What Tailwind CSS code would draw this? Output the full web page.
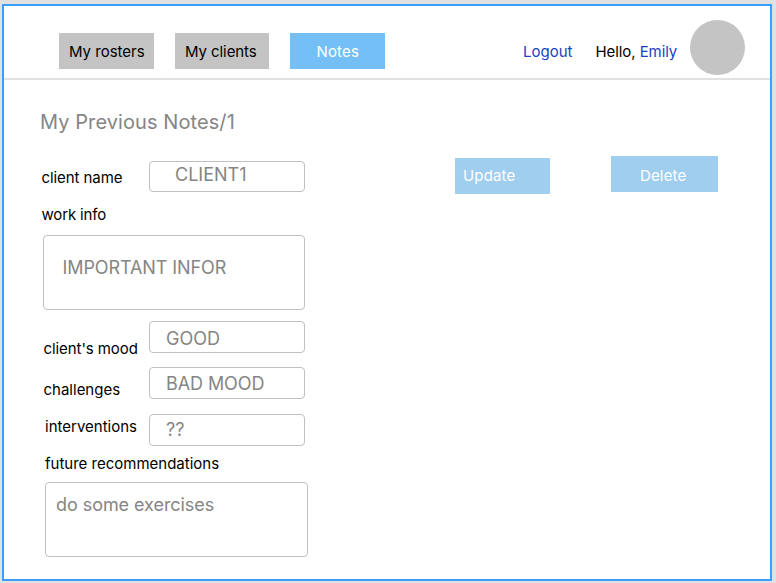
<!DOCTYPE html>
<html lang="en">
<head>
<meta charset="utf-8">
<title>My Previous Notes</title>
<script src="https://cdn.jsdelivr.net/npm/@tailwindcss/browser@4"></script>
</head>
<body class="h-[583px] w-[776px] overflow-hidden bg-[#e1e1e1] pt-1 pl-0.5 font-['Inter',sans-serif] text-[15px] leading-5 text-black">
<div class="h-[577px] w-[770px] border-2 border-[#3b9dfc] bg-white whitespace-nowrap">
  <header class="flex h-[74px] items-start border-b-2 border-[#e1e1e1] pl-[55px]">
    <nav class="mt-[27px] flex gap-[21px]">
      <a class="flex h-9 w-[95px] items-center bg-[#c4c4c4] pt-0.5 pl-2.5"><span>My rosters</span></a>
      <a class="flex h-9 w-[94px] items-center bg-[#c4c4c4] pt-0.5 pl-2.5 tracking-[-0.005em]"><span>My clients</span></a>
      <a class="flex h-9 w-[95px] items-center bg-[#74bff5] pt-0.5 pl-[26.5px] tracking-[0.01em] text-white"><span>Notes</span></a>
    </nav>
    <a class="mt-9 ml-[138px] w-[72px] text-[#1a3fc4]">Logout</a>
    <p class="mt-9 w-[95px] pl-[0.5px] tracking-[-0.005em]">Hello, <span class="text-[#1a3fc4]">Emily</span></p>
    <div class="mt-[14px] size-[55px] rounded-full bg-[#c4c4c4]"></div>
  </header>
  <main class="flex items-start">
    <section class="w-[451px] pl-9">
      <h1 class="pt-[29px] text-[20px] leading-[26px] tracking-[0.004em] text-[#858585]">My Previous Notes/1</h1>
      <div class="mt-[26px] flex h-[31px] items-start">
        <label class="mt-[7px] w-[109px] pl-[1.5px] tracking-[-0.005em]">client name</label>
        <div class="h-[31px] w-[156px] rounded-[4px] border border-[#c0c0c0] pt-px pl-[25px] text-[18px] leading-6 text-[#858585]">CLIENT1</div>
      </div>
      <label class="mt-[13px] block pl-[1.5px] tracking-[-0.01em]">work info</label>
      <div class="mt-2.5 ml-[3px] h-[75px] w-[262px] rounded-[4px] border border-[#c0c0c0] pt-5 pl-[18.5px] text-[18px] leading-6 tracking-[-0.005em] text-[#858585]">IMPORTANT INFOR</div>
      <div class="mt-[11px] flex h-8 items-start">
        <label class="mt-[18px] w-[109px] pl-[3.5px] tracking-[-0.005em]">client's mood</label>
        <div class="h-8 w-[156px] rounded-[4px] border border-[#c0c0c0] pt-[5px] pl-4 text-[18px] leading-6 text-[#858585]">GOOD</div>
      </div>
      <div class="mt-3.5 flex h-8 items-start">
        <label class="mt-[13px] w-[109px] pl-[3.5px]">challenges</label>
        <div class="h-8 w-[156px] rounded-[4px] border border-[#c0c0c0] pt-1 pl-4 text-[18px] leading-6 tracking-[-0.005em] text-[#858585]">BAD MOOD</div>
      </div>
      <div class="mt-[15px] flex h-8 items-start">
        <label class="mt-[3px] w-[109px] pl-[5px]">interventions</label>
        <div class="h-8 w-[156px] rounded-[4px] border border-[#c0c0c0] pt-[3px] pl-4 text-[18px] leading-6 text-[#858585]">??</div>
      </div>
      <label class="mt-2 block pl-[5px]">future recommendations</label>
      <div class="mt-2 ml-[5px] h-[75px] w-[263px] rounded-[4px] border border-[#c0c0c0] pt-2.5 pl-[10px] text-[18px] leading-6 tracking-[-0.003em] text-[#858585]">do some exercises</div>
    </section>
    <div class="flex items-start gap-[61px] pt-[76px] text-white">
      <button class="mt-0.5 flex h-9 w-[95px] items-center bg-[#a0ceef] pl-2 tracking-[0.01em]"><span>Update</span></button>
      <button class="flex h-9 w-[107px] items-center bg-[#a0ceef] pt-1 pl-[29px] tracking-[0.01em]"><span>Delete</span></button>
    </div>
  </main>
</div>
</body>
</html>
